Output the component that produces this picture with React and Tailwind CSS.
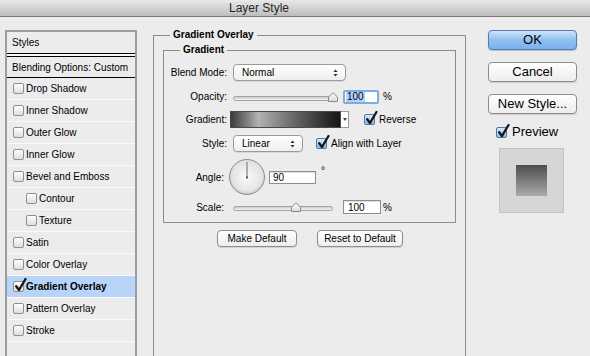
import React from "react";

// Photoshop "Layer Style" dialog, Gradient Overlay pane

function Check({ checked, blue }) {
  return (
    <span
      className={`relative inline-block w-[11px] h-[11px] shrink-0 rounded-[2px] border ${
        blue
          ? "border-[#4f78aa] bg-linear-to-b from-[#d6e8fb] to-[#8fbbe8]"
          : "border-[#8f8f8f] bg-linear-to-b from-white to-[#dedede]"
      }`}
    >
      {checked && (
        <svg className="absolute -top-[4px] left-[0px] w-[13px] h-[14px]" viewBox="0 0 13 14">
          <path d="M2.2 8.2 L5 12 L11.5 1" fill="none" stroke="#151515" strokeWidth="2.3" strokeLinecap="round" strokeLinejoin="round" />
        </svg>
      )}
    </span>
  );
}

function Arrows() {
  return (
    <svg width="5" height="8" viewBox="0 0 5 8">
      <path d="M2.5 0.5 L4.6 3 H0.4 Z M2.5 7.5 L4.6 5 H0.4 Z" fill="#333" />
    </svg>
  );
}

function Select({ value, w }) {
  return (
    <div className={`${w} h-[17px] flex items-center justify-between pl-[8px] pr-[7px] rounded-[4px] border border-[#9b9b9b] bg-linear-to-b from-white to-[#eeeeee] shadow-[0_1px_0_rgba(0,0,0,0.08)]`}>
      <span>{value}</span>
      <Arrows />
    </div>
  );
}

function Thumb({ left }) {
  return (
    <svg className={`absolute top-0 ${left}`} width="10" height="10" viewBox="0 0 10 10">
      <defs>
        <linearGradient id="tg" x1="0" y1="0" x2="0" y2="1">
          <stop offset="0" stopColor="#ffffff" />
          <stop offset="1" stopColor="#d9d9d9" />
        </linearGradient>
      </defs>
      <path d="M0.5 9.5 V5 L5 0.8 L9.5 5 V9.5 Z" fill="url(#tg)" stroke="#8a8a8a" strokeWidth="1" strokeLinejoin="round" />
    </svg>
  );
}

function Slider({ w, thumb }) {
  return (
    <div className={`relative ${w} h-[10px] shrink-0`}>
      <div className="absolute left-0 right-[3px] top-[4px] h-[5px] rounded-full border border-[#a3a3a3] bg-linear-to-b from-[#c9c9c9] to-[#f4f4f4]" />
      <Thumb left={thumb} />
    </div>
  );
}

function Btn({ children, w, primary }) {
  return (
    <div
      className={`${w} h-[20px] flex items-center justify-center rounded-[4px] border text-[13px] ${
        primary
          ? "border-[#5479ad] bg-linear-to-b from-[#cfe4fa] via-[#8fc0f1] to-[#79b2ee] shadow-[0_1px_1px_rgba(0,0,0,0.2)]"
          : "border-[#8d8d8d] bg-linear-to-b from-white to-[#ededed] shadow-[0_1px_1px_rgba(0,0,0,0.12)]"
      }`}
    >
      {children}
    </div>
  );
}

const items = [
  ["Drop Shadow"],
  ["Inner Shadow"],
  ["Outer Glow"],
  ["Inner Glow"],
  ["Bevel and Emboss"],
  ["Contour", true],
  ["Texture", true],
  ["Satin"],
  ["Color Overlay"],
  ["Gradient Overlay", false, true],
  ["Pattern Overlay"],
  ["Stroke"],
];

export default function App() {
  return (
    <div className="w-[590px] h-[356px] overflow-hidden bg-[#ececec] text-[10px] text-black font-['Liberation_Sans',Arial,sans-serif]">
      {/* title bar */}
      <div className="h-[17px] border-b border-[#7a7a7a] bg-linear-to-b from-[#e9e9e9] to-[#bdbdbd]">
        <div className="w-[518px] text-center text-[12px] leading-[16px] text-[#262626]">Layer Style</div>
      </div>

      <div className="flex items-start">
        {/* styles list */}
        <div className="ml-[5px] mt-[13px] w-[132px] h-[340px] shrink-0 border-2 border-b-0 border-[#9d9d9d]">
          <div className="h-[21px] flex items-center pl-[5px]">Styles</div>
          <div className="h-[4px] border-y border-black bg-[#f6f6f6]" />
          <div className="h-[21px] flex items-center pl-[5px] border-b border-black">Blending Options: Custom</div>
          {items.map(([name, sub, active]) => (
            <div
              key={name}
              className={`h-[22px] flex items-center gap-[2px] border-b border-[#fafafa] ${sub ? "pl-[19px]" : "pl-[6px]"} ${
                active ? "bg-[#b8d5f9] font-bold" : ""
              }`}
            >
              <Check checked={active} />
              <span>{name}</span>
            </div>
          ))}
        </div>

        {/* main pane */}
        <fieldset className="ml-[16px] mt-[12px] w-[313px] h-[340px] shrink-0 border border-[#8c8c8c] px-[9px]">
          <legend className="ml-[7px] px-[3px] leading-[12px] font-bold">Gradient Overlay</legend>

          <fieldset className="mt-[3px] border border-[#8c8c8c] pb-[8px]">
            <legend className="ml-[16px] px-[3px] leading-[12px] font-bold">Gradient</legend>

            <div className="mt-[8px] flex items-center">
              <div className="w-[63px] text-right">Blend Mode:</div>
              <div className="ml-[6px]">
                <Select value="Normal" w="w-[113px]" />
              </div>
            </div>

            <div className="mt-[9px] h-[13px] flex items-center">
              <div className="w-[63px] text-right">Opacity:</div>
              <div className="ml-[6px]">
                <Slider w="w-[104px]" thumb="left-[95px]" />
              </div>
              <div className="ml-[6px] w-[36px] h-[14px] rounded-[2px] border-2 border-[#80abe0] bg-white flex items-center pl-[1px]">
                <span className="bg-[#b4d3fb] px-[1px] leading-[10px]">100</span>
              </div>
              <span className="ml-[4px]">%</span>
            </div>

            <div className="mt-[8px] h-[17px] flex items-center">
              <div className="w-[63px] text-right">Gradient:</div>
              <div className="ml-[3px] w-[111px] h-[17px] border border-[#4a4a4a] bg-linear-to-r from-[#3c3c3c] via-[#b3b3b3] via-25% to-[#161616]" />
              <div className="w-[8px] h-[17px] border border-l-0 border-[#9a9a9a] bg-white flex items-center justify-center">
                <svg width="4" height="3" viewBox="0 0 4 3">
                  <path d="M0 0 H4 L2 3 Z" fill="#444" />
                </svg>
              </div>
              <div className="ml-[15px] flex items-center gap-[4px]">
                <Check checked blue />
                <span>Reverse</span>
              </div>
            </div>

            <div className="mt-[7px] h-[17px] flex items-center">
              <div className="w-[63px] text-right">Style:</div>
              <div className="ml-[6px]">
                <Select value="Linear" w="w-[70px]" />
              </div>
              <div className="ml-[13px] flex items-center gap-[4px]">
                <Check checked blue />
                <span>Align with Layer</span>
              </div>
            </div>

            <div className="mt-[7px] h-[36px] flex items-center">
              <div className="w-[63px] text-right pr-[3px]">Angle:</div>
              <div className="ml-[2px] relative w-[36px] h-[36px] rounded-full border border-[#8d8d8d] bg-radial from-[#fafafa] to-[#d6d6d6] shadow-[inset_0_-1px_2px_rgba(0,0,0,0.15)]">
                <svg className="absolute inset-0" width="34" height="34" viewBox="0 0 34 34">
                  <line x1="17" y1="17.5" x2="17" y2="2" stroke="#6a6a6a" strokeWidth="1" />
                  <rect x="16" y="16.5" width="2" height="2" fill="#555" />
                </svg>
              </div>
              <div className="ml-[4px] w-[47px] h-[13px] border border-[#8e8e8e] bg-white shadow-[inset_0_1px_1px_rgba(0,0,0,0.15)] flex items-center pl-[3px]">
                90
              </div>
              <span className="ml-[5px] self-start mt-[8px] leading-[8px]">°</span>
            </div>

            <div className="mt-[5px] h-[14px] flex items-center">
              <div className="w-[63px] text-right pr-[3px]">Scale:</div>
              <div className="ml-[6px]">
                <Slider w="w-[103px]" thumb="left-[58px]" />
              </div>
              <div className="ml-[7px] w-[38px] h-[14px] border border-[#8e8e8e] bg-white shadow-[inset_0_1px_1px_rgba(0,0,0,0.15)] flex items-center pl-[4px]">
                100
              </div>
              <span className="ml-[2px]">%</span>
            </div>
          </fieldset>

          <div className="mt-[7px] pl-[54px] flex gap-[20px]">
            <div className="w-[80px] h-[17px] flex items-center justify-center rounded-[4px] border border-[#8d8d8d] bg-linear-to-b from-white to-[#ededed] shadow-[0_1px_1px_rgba(0,0,0,0.12)]">
              Make Default
            </div>
            <div className="w-[86px] h-[17px] flex items-center justify-center rounded-[4px] border border-[#8d8d8d] bg-linear-to-b from-white to-[#ededed] shadow-[0_1px_1px_rgba(0,0,0,0.12)]">
              Reset to Default
            </div>
          </div>
        </fieldset>

        {/* right column */}
        <div className="ml-[22px] mt-[13px] flex flex-col">
          <Btn w="w-[89px]" primary>OK</Btn>
          <div className="mt-[12px]">
            <Btn w="w-[89px]">Cancel</Btn>
          </div>
          <div className="mt-[12px]">
            <Btn w="w-[89px]">New Style...</Btn>
          </div>
          <div className="mt-[12px] ml-[8px] h-[12px] flex items-center gap-[5px] text-[13px]">
            <Check checked blue />
            <span>Preview</span>
          </div>
          <div className="mt-[10px] ml-[11px] w-[65px] h-[65px] border border-[#c3c3c3] bg-[#d6d6d6] flex items-center justify-center">
            <div className="w-[31px] h-[31px] bg-linear-to-b from-[#4e4e4e] to-[#ababab]" />
          </div>
        </div>
      </div>
    </div>
  );
}
